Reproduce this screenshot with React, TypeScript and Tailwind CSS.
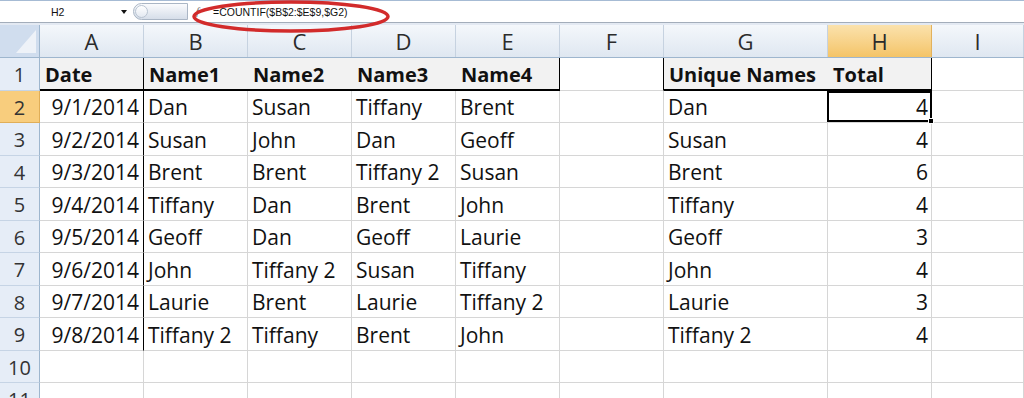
import React from 'react';

type Col = { key: string; w: string };

const COLS: Col[] = [
  { key: 'A', w: 'w-[104px]' },
  { key: 'B', w: 'w-[104px]' },
  { key: 'C', w: 'w-[104px]' },
  { key: 'D', w: 'w-[104px]' },
  { key: 'E', w: 'w-[104px]' },
  { key: 'F', w: 'w-[104px]' },
  { key: 'G', w: 'w-[164px]' },
  { key: 'H', w: 'w-[104px]' },
  { key: 'I', w: 'flex-1' },
];

// sheet contents, row 1 is the heading row
const ROWS: string[][] = [
  ['Date', 'Name1', 'Name2', 'Name3', 'Name4', '', 'Unique Names', 'Total', ''],
  ['9/1/2014', 'Dan', 'Susan', 'Tiffany', 'Brent', '', 'Dan', '4', ''],
  ['9/2/2014', 'Susan', 'John', 'Dan', 'Geoff', '', 'Susan', '4', ''],
  ['9/3/2014', 'Brent', 'Brent', 'Tiffany 2', 'Susan', '', 'Brent', '6', ''],
  ['9/4/2014', 'Tiffany', 'Dan', 'Brent', 'John', '', 'Tiffany', '4', ''],
  ['9/5/2014', 'Geoff', 'Dan', 'Geoff', 'Laurie', '', 'Geoff', '3', ''],
  ['9/6/2014', 'John', 'Tiffany 2', 'Susan', 'Tiffany', '', 'John', '4', ''],
  ['9/7/2014', 'Laurie', 'Brent', 'Laurie', 'Tiffany 2', '', 'Laurie', '3', ''],
  ['9/8/2014', 'Tiffany 2', 'Tiffany', 'Brent', 'John', '', 'Tiffany 2', '4', ''],
  ['', '', '', '', '', '', '', '', ''],
  ['', '', '', '', '', '', '', '', ''],
];

function cellClass(r: number, c: number) {
  const parts = ['flex items-center pt-[3px] whitespace-nowrap text-[#111]', COLS[c].w];
  const filled = r === 0 && c !== 5 && c !== 8;

  // bottom border
  if (filled) parts.push('bg-[#f2f2f2] border-b-2 border-b-black');
  else parts.push('border-b border-b-[#d6d6d6]');

  // right border
  if (r === 0) {
    if (c === 0 || c === 4 || c === 5 || c === 7) parts.push('border-r border-r-black');
    else if (c === 8) parts.push('border-r border-r-[#d6d6d6]');
  } else if (r <= 8 && c === 0) {
    parts.push('border-r border-r-black');
  } else {
    parts.push('border-r border-r-[#d6d6d6]');
  }

  // text alignment
  if (r === 0) parts.push('text-[20px] font-bold pl-[5px]');
  else if (c === 0) parts.push('text-[21px] justify-end pr-[4px]');
  else if (c === 7) parts.push('text-[21px] justify-end pr-[3px]');
  else parts.push('text-[21px] pl-[4px]');

  if (r === 1 && c === 7) parts.push('relative');
  return parts.join(' ');
}

function FormulaBar() {
  return (
    <div className="h-[25px] flex flex-col">
      <div className="h-[23px] flex border-t border-t-[#a6bbd4] border-b border-b-[#a3adba] bg-white">
        <div className="w-[130px] flex items-center">
          <span className="pl-[51px] pt-[2px] text-[10.5px] text-[#111] font-['Liberation_Sans',Arial,sans-serif]">H2</span>
          <span className="ml-auto mr-[3px] mt-[1px] w-0 h-0 border-l-[3.5px] border-r-[3.5px] border-t-[4px] border-l-transparent border-r-transparent border-t-[#111]" />
        </div>
        <div className="ml-[3px] my-[2px] w-[55px] rounded-l-full border border-[#aab6c5] bg-linear-to-b from-[#fafbfd] to-[#d6dee9] flex items-center">
          <span className="ml-[1px] w-[13px] h-[13px] rounded-full border border-[#b9c4d2] bg-linear-to-b from-white to-[#e3e9f1]" />
        </div>
        <div className="w-[12px] flex items-center justify-end pr-[1px]">
          <span className="text-[11px] italic text-[#666] font-['Liberation_Serif',serif]">f</span>
        </div>
        <div className="flex-1 flex items-center pl-[13px] pt-[3px]">
          <span className="text-[10.5px] text-[#111] font-['Liberation_Sans',Arial,sans-serif]">=COUNTIF($B$2:$E$9,$G2)</span>
        </div>
      </div>
      <div className="h-[2px] bg-[#e3e9f2]" />
    </div>
  );
}

function HeaderRow() {
  return (
    <div className="flex h-[33px] border-b border-b-[#9eb6ce]">
      <div className="w-[40px] bg-[#d0ddee] border-r border-r-[#9eb6ce]">
        <svg width="39" height="32" viewBox="0 0 39 32">
          <polygon points="36,5 36,28 16,28" fill="#eef2f8" />
        </svg>
      </div>
      {COLS.map((col) =>
        col.key === 'H' ? (
          <div
            key={col.key}
            className={`${col.w} flex items-center justify-center bg-linear-to-b from-[#fbe2ac] to-[#f4c467] border-r border-r-[#e2b15c] text-[22px] text-[#2b2b2b]`}
          >
            {col.key}
          </div>
        ) : (
          <div
            key={col.key}
            className={`${col.w} flex items-center justify-center bg-linear-to-b from-[#f4f7fb] to-[#dfe7f1] border-r border-r-[#c6d2e0] text-[22px] text-[#2b2b2b]`}
          >
            {col.key}
          </div>
        )
      )}
    </div>
  );
}

export default function App() {
  return (
    <div className="relative w-[1024px] h-[398px] overflow-hidden bg-white font-['Open_Sans',sans-serif]">
      <FormulaBar />
      <HeaderRow />
      {ROWS.map((row, r) => (
        <div key={r} className="flex h-[32.5px]">
          {r === 1 ? (
            <div className="w-[40px] flex items-center justify-center pt-[3px] bg-[#f8cd7d] border-r border-r-[#e0ae58] border-b border-b-[#e0ae58] text-[20px] text-[#333]">
              {r + 1}
            </div>
          ) : (
            <div className="w-[40px] flex items-center justify-center pt-[3px] bg-[#e6edf7] border-r border-r-[#9eb6ce] border-b border-b-[#c6d4e5] text-[20px] text-[#333]">
              {r + 1}
            </div>
          )}
          {row.map((v, c) => (
            <div key={c} className={cellClass(r, c)}>
              {v}
              {r === 1 && c === 7 && (
                <div className="absolute -left-[1px] top-0 -right-[1px] bottom-0 border-2 border-black">
                  <span className="absolute -right-[4px] -bottom-[4px] w-[6px] h-[6px] bg-black border border-white" />
                </div>
              )}
            </div>
          ))}
        </div>
      ))}

      {/* red marker ring round the formula */}
      <svg className="absolute left-[190px] top-0" width="204" height="34" viewBox="0 0 204 34">
        <ellipse cx="101" cy="16.5" rx="97" ry="14.5" fill="none" stroke="#d22b2b" strokeWidth="3.5" />
      </svg>
    </div>
  );
}
